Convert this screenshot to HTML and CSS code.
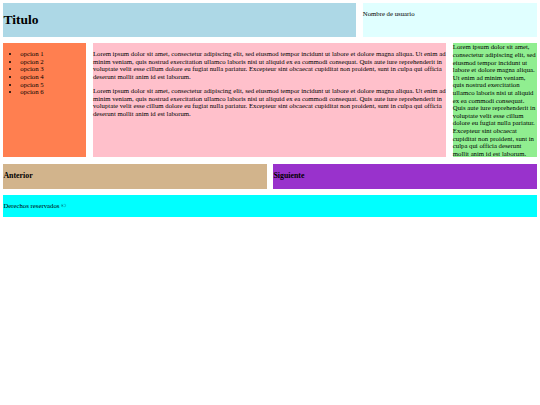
FILE: index.html
```html
<!DOCTYPE html>
<html lang="es">
<head>
<meta charset="utf-8">
<title>Titulo</title>
<link rel="stylesheet" href="styles.css">
</head>
<body>
<div class="page">
  <div class="row row-header">
    <header class="title"><h1>Titulo</h1></header>
    <div class="user"><p>Nombre de usuario</p></div>
  </div>
  <div class="row row-main">
    <aside class="menu">
      <ul>
        <li>opcion 1</li>
        <li>opcion 2</li>
        <li>opcion 3</li>
        <li>opcion 4</li>
        <li>opcion 5</li>
        <li>opcion 6</li>
      </ul>
    </aside>
    <main class="content">
      <p>Lorem ipsum dolor sit amet, consectetur adipiscing elit, sed eiusmod tempor incidunt ut labore et dolore magna aliqua. Ut enim ad minim veniam, quis nostrud exercitation ullamco laboris nisi ut aliquid ex ea commodi consequat. Quis aute iure reprehenderit in voluptate velit esse cillum dolore eu fugiat nulla pariatur. Excepteur sint obcaecat cupiditat non proident, sunt in culpa qui officia deserunt mollit anim id est laborum.</p>
      <p>Lorem ipsum dolor sit amet, consectetur adipiscing elit, sed eiusmod tempor incidunt ut labore et dolore magna aliqua. Ut enim ad minim veniam, quis nostrud exercitation ullamco laboris nisi ut aliquid ex ea commodi consequat. Quis aute iure reprehenderit in voluptate velit esse cillum dolore eu fugiat nulla pariatur. Excepteur sint obcaecat cupiditat non proident, sunt in culpa qui officia deserunt mollit anim id est laborum.</p>
    </main>
    <aside class="extra">Lorem ipsum dolor sit amet, consectetur adipiscing elit, sed eiusmod tempor incidunt ut labore et dolore magna aliqua. Ut enim ad minim veniam, quis nostrud exercitation ullamco laboris nisi ut aliquid ex ea commodi consequat. Quis aute iure reprehenderit in voluptate velit esse cillum dolore eu fugiat nulla pariatur. Excepteur sint obcaecat cupiditat non proident, sunt in culpa qui officia deserunt mollit anim id est laborum.</aside>
  </div>
  <nav class="row row-nav">
    <div class="prev"><h3>Anterior</h3></div>
    <div class="next"><h3>Siguiente</h3></div>
  </nav>
  <footer class="footer"><p>Derechos reservados ©</p></footer>
</div>
</body>
</html>
```
FILE: styles.css
```css
html, body {
  background: #ffffff;
}
body {
  margin: 3.375px;
  font-family: "Liberation Serif", "Times New Roman", serif;
  font-size: 6.75px;
  line-height: 1.125;
  color: #000000;
}
.page {
  display: flex;
  flex-direction: column;
  gap: 6.75px;
}
.row {
  display: grid;
  gap: 6.75px;
}
.row-header {
  grid-template-columns: 353fr 174fr;
}
.row-main {
  grid-template-columns: 83fr 354fr 84fr;
}
.row-nav {
  grid-template-columns: 1fr 1fr;
}
.title {
  background: #add8e6;
  display: flow-root;
}
.title h1 {
  font-size: 2em;
  margin: 0.67em 0;
}
.user {
  background: #e0ffff;
  display: flow-root;
}
.menu {
  background: #ff7f50;
  display: flow-root;
}
.menu ul {
  margin: 1em 0;
  padding-left: 16.875px;
}
.content {
  background: #ffc0cb;
  display: flow-root;
}
.extra {
  background: #90ee90;
}
.prev {
  background: #d2b48c;
  display: flow-root;
}
.next {
  background: #9932cc;
  display: flow-root;
}
.prev h3, .next h3 {
  margin: 1em 0;
  font-size: 1.17em;
}
.footer {
  background: #00ffff;
  display: flow-root;
}
p {
  margin: 1em 0;
}
```
